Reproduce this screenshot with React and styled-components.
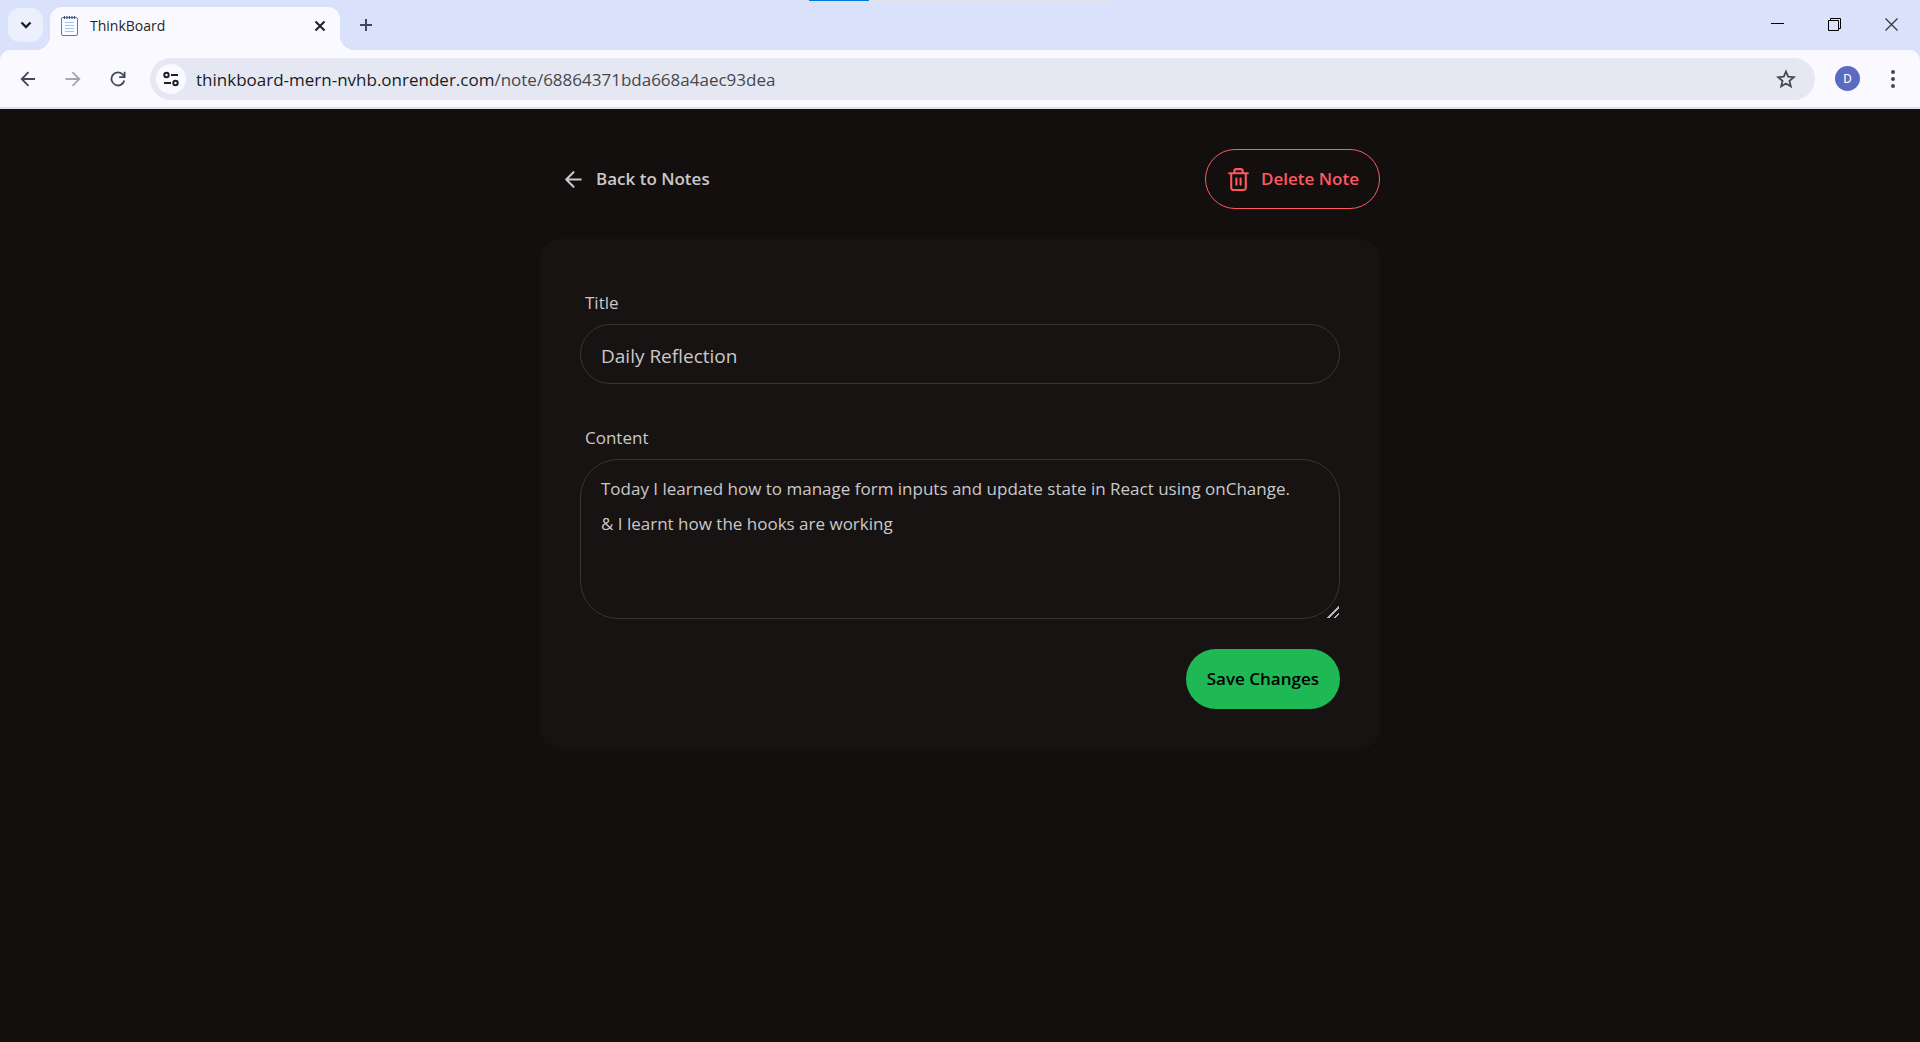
import React, { useState } from 'react';
import styled, { createGlobalStyle, css } from 'styled-components';

const GlobalStyle = createGlobalStyle`
  *, *::before, *::after { box-sizing: border-box; }
  body {
    margin: 0;
    background: #130f0e;
    font-family: 'Segoe UI', 'Open Sans', 'Noto Sans', sans-serif;
  }
  button, input, textarea { font-family: inherit; }
  svg { display: block; flex: none; }
`;

const Window = styled.div`
  display: flex;
  flex-direction: column;
  min-height: 100vh;
`;

/* Browser frame */

const Frame = styled.header`
  position: relative;
  background: #dae1fa;
  border-bottom: 2px solid #dde2ee;
`;

const LoadingBar = styled.div`
  position: absolute;
  top: 0;
  left: 50%;
  transform: translateX(-50%);
  width: 302px;
  height: 1px;
  background: linear-gradient(to right, #0078d7 60px, #e5e5e5 60px);
`;

const TabStrip = styled.div`
  display: flex;
  align-items: center;
  height: 50px;
  padding-left: 8px;
`;

const PlainButton = styled.button`
  display: flex;
  align-items: center;
  justify-content: center;
  padding: 0;
  border: 0;
  background: none;
  color: ${(p) => p.$color || '#3f4759'};
  cursor: pointer;
`;

const TabSearch = styled(PlainButton)`
  width: 35px;
  height: 34px;
  border-radius: 12px;
  background: #ebeffe;
`;

const Tab = styled.div`
  position: relative;
  display: flex;
  align-items: center;
  align-self: flex-end;
  gap: 12px;
  width: 290px;
  height: 43px;
  margin-left: 7px;
  padding: 0 14px 6px 11px;
  border-radius: 12px 12px 0 0;
  background: #faf9ff;

  &::before,
  &::after {
    content: '';
    position: absolute;
    bottom: 0;
    width: 14px;
    height: 14px;
  }
  &::before {
    right: 100%;
    background: radial-gradient(circle at 0 0, transparent 14px, #faf9ff 14px);
  }
  &::after {
    left: 100%;
    background: radial-gradient(circle at 100% 0, transparent 14px, #faf9ff 14px);
  }
`;

const TabTitle = styled.span`
  flex: 1;
  font-size: 14px;
  line-height: 20px;
  color: #1f1f1f;
`;

const NewTab = styled(PlainButton)`
  width: 34px;
  height: 34px;
  margin-left: 9px;
`;

const WindowControls = styled.div`
  display: flex;
  align-self: flex-start;
  margin-left: auto;
`;

const WindowControl = styled(PlainButton)`
  width: 57px;
  height: 48px;
`;

const Toolbar = styled.div`
  display: flex;
  align-items: center;
  gap: 15px;
  height: 57px;
  padding: 0 10px;
  border-radius: 10px 10px 0 0;
  background: #faf9ff;
`;

const ToolGroup = styled.div`
  display: flex;
  gap: 10px;
`;

const ToolButton = styled(PlainButton)`
  width: 35px;
  height: 35px;
`;

const AddressBar = styled.div`
  display: flex;
  flex: 1;
  align-items: center;
  min-width: 0;
  height: 42px;
  padding: 0 12px 0 6px;
  border-radius: 21px;
  background: #e5e8f3;
`;

const SiteInfo = styled(PlainButton)`
  width: 30px;
  height: 30px;
  border-radius: 50%;
  background: #faf9ff;
`;

const Address = styled.div`
  flex: 1;
  min-width: 0;
  margin-left: 10px;
  padding-top: 2px;
  overflow: hidden;
  white-space: nowrap;
  outline: none;
  font-size: 17px;
  line-height: 24px;
  color: #1b1b1f;
`;

const AddressPath = styled.span`
  color: #47474b;
`;

const Avatar = styled.span`
  display: flex;
  align-items: center;
  justify-content: center;
  width: 25px;
  height: 25px;
  border-radius: 50%;
  background: #5c6bc0;
  color: #fff;
  font-family: Roboto, sans-serif;
  font-size: 13px;
`;

/* Note page */

const Page = styled.main`
  flex: 1;
  padding: 40px 20px;
  background: #130f0e;
  color: #cac9c9;
`;

const Container = styled.div`
  display: flex;
  flex-direction: column;
  gap: 30px;
  max-width: 840px;
  margin: 0 auto;
`;

const Actions = styled.div`
  display: flex;
  align-items: center;
  justify-content: space-between;
`;

const pill = css`
  display: inline-flex;
  align-items: center;
  justify-content: center;
  gap: 10px;
  height: 60px;
  padding: 0 20px;
  border: 1px solid transparent;
  border-radius: 30px;
  background: none;
  font-size: 17px;
  font-weight: 600;
  line-height: 24px;
  text-decoration: none;
  cursor: pointer;
`;

const BackLink = styled.a`
  ${pill}
  color: #cac9c9;
`;

const DeleteButton = styled.button`
  ${pill}
  border-color: #ff5861;
  color: #ff5861;
`;

const SaveButton = styled.button`
  ${pill}
  align-self: flex-end;
  background: #1eb854;
  color: #000;
`;

const Card = styled.form`
  display: flex;
  flex-direction: column;
  gap: 30px;
  padding: 40px;
  border-radius: 20px;
  background: #171312;
`;

const Field = styled.div`
  display: flex;
  flex-direction: column;
`;

const Label = styled.label`
  padding: 11px 5px 9px;
  font-size: 17px;
  line-height: 25px;
`;

const control = css`
  width: 100%;
  border: 1px solid #393534;
  background: #171312;
  color: #cac9c9;
  outline: none;
`;

const TextInput = styled.input`
  ${control}
  height: 60px;
  padding: 4px 20px 0;
  border-radius: 30px;
  font-size: 19px;
`;

const TextArea = styled.textarea`
  ${control}
  display: block;
  height: 160px;
  padding: 11px 20px 9px;
  border-radius: 38px;
  font-size: 17px;
  line-height: 35px;
  resize: vertical;

  &::-webkit-resizer {
    background: linear-gradient(
      135deg,
      transparent 60%,
      #b5b3b3 60%,
      #b5b3b3 70%,
      transparent 70%,
      transparent 82%,
      #b5b3b3 82%,
      #b5b3b3 90%,
      transparent 90%
    );
  }
`;

const Stroke = ({ size = 20, width = 2, box = 24, children }) => (
  <svg
    width={size}
    height={size}
    viewBox={`0 0 ${box} ${box}`}
    fill="none"
    stroke="currentColor"
    strokeWidth={width}
    aria-hidden="true"
  >
    {children}
  </svg>
);

const NotepadIcon = () => (
  <svg width="17" height="21" viewBox="0 0 17 21" fill="none" aria-hidden="true">
    <rect x="0.5" y="2.500" width="16" height="18" rx="1.500" fill="#fbfcff" stroke="#6277a4" />
    <path d="M3.500 1v3M6 1v3M8.500 1v3M11 1v3M13.500 1v3" stroke="#44527e" strokeWidth="1.200" />
    <path d="M4 7.500h9M4 10.500h9M4 13.500h9M4 16.500h9" stroke="#9cc8f5" />
  </svg>
);

export default function App() {
  const [title, setTitle] = useState('Daily Reflection');
  const [content, setContent] = useState(
    'Today I learned how to manage form inputs and update state in React using onChange.\n& I learnt how the hooks are working'
  );

  return (
    <Window>
      <GlobalStyle />
      <Frame>
        <TabStrip>
          <TabSearch type="button" aria-label="Search tabs" $color="#1f1f1f">
            <Stroke size={12} box={12} width={2.4}>
              <path d="M1.5 3.5 6 8l4.500-4.500" />
            </Stroke>
          </TabSearch>
          <Tab>
            <NotepadIcon />
            <TabTitle>ThinkBoard</TabTitle>
            <PlainButton type="button" aria-label="Close tab" $color="#1f1f1f">
              <Stroke size={12} box={12} width={2}>
                <path d="m1.500 1.500 9 9m0-9-9 9" />
              </Stroke>
            </PlainButton>
          </Tab>
          <NewTab type="button" aria-label="New tab">
            <Stroke size={14} box={14} width={2}>
              <path d="M7 1v12M1 7h12" />
            </Stroke>
          </NewTab>
          <WindowControls>
            <WindowControl type="button" aria-label="Minimize" $color="#000">
              <Stroke size={13} box={13} width={1}>
                <path d="M0 5.500h13" />
              </Stroke>
            </WindowControl>
            <WindowControl type="button" aria-label="Restore" $color="#000">
              <Stroke size={13} box={13} width={1}>
                <path d="M0.500 2.500h10v10h-10zM2.500 2.500v-2h10v10h-2" />
              </Stroke>
            </WindowControl>
            <WindowControl type="button" aria-label="Close" $color="#333">
              <Stroke size={13} box={13} width={1.2}>
                <path d="m0.500 0.500 12 12m0-12-12 12" />
              </Stroke>
            </WindowControl>
          </WindowControls>
        </TabStrip>
        <Toolbar>
          <ToolGroup>
            <ToolButton type="button" aria-label="Back">
              <Stroke size={16} box={16} width={1.8}>
                <path d="M15 8H2M8.500 1.200 1.700 8l6.800 6.800" />
              </Stroke>
            </ToolButton>
            <ToolButton type="button" aria-label="Forward" $color="#a5a6ad">
              <Stroke size={16} box={16} width={1.8}>
                <path d="M0.500 8H14M7.500 1.200l6.800 6.800-6.800 6.800" />
              </Stroke>
            </ToolButton>
            <ToolButton type="button" aria-label="Reload">
              <Stroke size={16} box={16} width={1.8}>
                <path d="M14.300 9.500A6.500 6.500 0 1 1 13 3.800L14.500 5.500M14.600 0.800v5.400H9.200" />
              </Stroke>
            </ToolButton>
          </ToolGroup>
          <AddressBar>
            <SiteInfo type="button" aria-label="View site information" $color="#1f1f1f">
              <Stroke size={16} box={16}>
                <circle cx="3.500" cy="4" r="2.200" />
                <path d="M8 4h7M1 12h7" />
                <circle cx="12.500" cy="12" r="2.200" />
              </Stroke>
            </SiteInfo>
            <Address
              role="textbox"
              aria-label="Address"
              contentEditable
              suppressContentEditableWarning
              spellCheck={false}
            >
              thinkboard-mern-nvhb.onrender.com
              <AddressPath>/note/68864371bda668a4aec93dea</AddressPath>
            </Address>
            <ToolButton type="button" aria-label="Bookmark this tab" $color="#47474b">
              <Stroke size={20} box={20} width={1.8}>
                <path d="M10 2.500l2.200 5.200 5.600.5-4.300 3.700 1.300 5.500-4.800-2.900-4.800 2.900 1.300-5.500L2.200 8.200l5.600-.5z" />
              </Stroke>
            </ToolButton>
          </AddressBar>
          <ToolGroup>
            <ToolButton type="button" aria-label="Profile">
              <Avatar>D</Avatar>
            </ToolButton>
            <ToolButton type="button" aria-label="Menu">
              <svg width="4" height="18" viewBox="0 0 4 18" fill="currentColor" aria-hidden="true">
                <circle cx="2" cy="2" r="2" />
                <circle cx="2" cy="9" r="2" />
                <circle cx="2" cy="16" r="2" />
              </svg>
            </ToolButton>
          </ToolGroup>
        </Toolbar>
        <LoadingBar />
      </Frame>

      <Page>
        <Container>
          <Actions>
            <BackLink href="#notes">
              <svg
                width="25"
                height="25"
                viewBox="0 0 24 24"
                fill="none"
                stroke="currentColor"
                strokeWidth="2"
                strokeLinecap="round"
                strokeLinejoin="round"
                aria-hidden="true"
              >
                <path d="m12 19-7-7 7-7M19 12H5" />
              </svg>
              Back to Notes
            </BackLink>
            <DeleteButton type="button">
              <svg
                width="25"
                height="25"
                viewBox="0 0 24 24"
                fill="none"
                stroke="currentColor"
                strokeWidth="2"
                strokeLinecap="round"
                strokeLinejoin="round"
                aria-hidden="true"
              >
                <path d="M3 6h18M19 6v14c0 1-1 2-2 2H7c-1 0-2-1-2-2V6M8 6V4c0-1 1-2 2-2h4c1 0 2 1 2 2v2M10 11v6M14 11v6" />
              </svg>
              Delete Note
            </DeleteButton>
          </Actions>
          <Card onSubmit={(e) => e.preventDefault()}>
            <Field>
              <Label htmlFor="title">Title</Label>
              <TextInput id="title" value={title} onChange={(e) => setTitle(e.target.value)} />
            </Field>
            <Field>
              <Label htmlFor="content">Content</Label>
              <TextArea
                id="content"
                spellCheck={false}
                value={content}
                onChange={(e) => setContent(e.target.value)}
              />
            </Field>
            <SaveButton type="submit">Save Changes</SaveButton>
          </Card>
        </Container>
      </Page>
    </Window>
  );
}
